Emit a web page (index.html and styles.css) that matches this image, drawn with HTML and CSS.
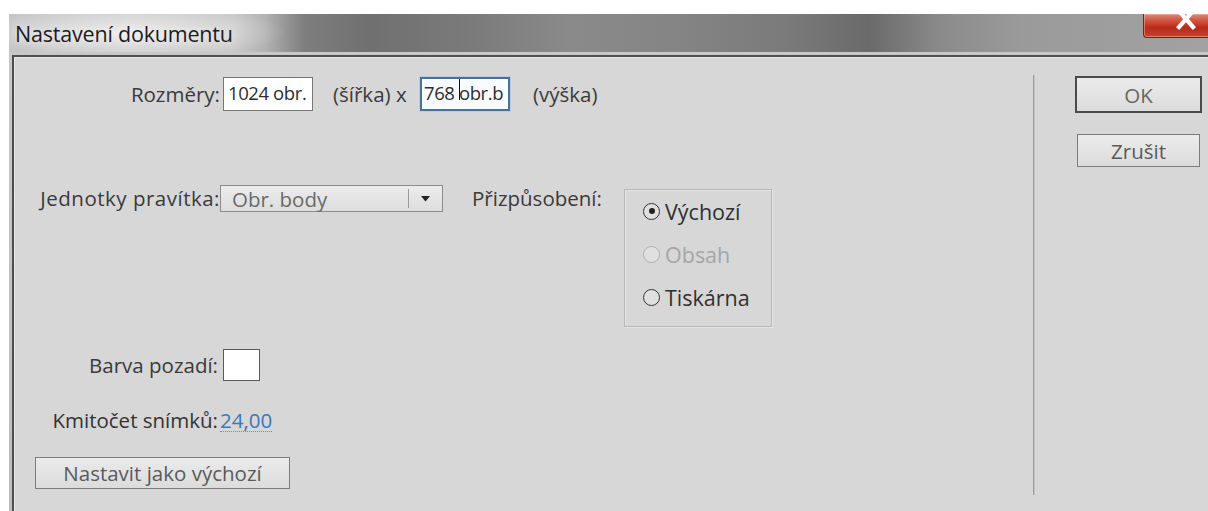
FILE: index.html
```html
<!DOCTYPE html>
<html lang="cs">
<head>
<meta charset="utf-8">
<title>Nastavení dokumentu</title>
<link rel="stylesheet" href="styles.css">
</head>
<body>
<div class="window">
  <div class="titlebar">
    <span class="title">Nastavení dokumentu</span>
    <div class="close">
      <svg class="close-x" width="22" height="20" viewBox="0 0 22 20">
        <path d="M4 1 L18 17 M18 1 L4 17" stroke="#fff" stroke-width="4.2" stroke-linecap="square"/>
      </svg>
    </div>
  </div>
  <div class="frame">
    <div class="dialog">
      <div class="main">
        <div class="row row-size">
          <span class="lbl">Rozměry:</span>
          <span class="field field-w">1024 obr.</span>
          <span class="txt txt-w">(šířka) x</span>
          <span class="field field-h focused">768 <span class="caret"></span>obr.b</span>
          <span class="txt txt-h">(výška)</span>
        </div>
        <div class="row row-units">
          <span class="lbl lbl-units">Jednotky pravítka:</span>
          <div class="select">
            <span class="select-value">Obr. body</span>
            <span class="select-arrow">
              <svg width="9" height="6" viewBox="0 0 9 6"><path d="M0 0 H9 L4.5 5.5 Z" fill="#222"/></svg>
            </span>
          </div>
          <span class="txt fit">Přizpůsobení:</span>
          <div class="group">
            <div class="radio checked"><span class="dot"></span>Výchozí</div>
            <div class="radio disabled"><span class="dot"></span>Obsah</div>
            <div class="radio"><span class="dot"></span>Tiskárna</div>
          </div>
        </div>
        <div class="row row-bg">
          <span class="lbl lbl-short">Barva pozadí:</span>
          <span class="swatch"></span>
        </div>
        <div class="row row-fps">
          <span class="lbl lbl-short">Kmitočet snímků:</span>
          <span class="fps">24,00</span>
        </div>
        <div class="row row-btn">
          <button class="btn btn-default-set">Nastavit jako výchozí</button>
        </div>
      </div>
      <div class="sep"></div>
      <div class="side">
        <button class="btn btn-ok">OK</button>
        <button class="btn btn-cancel">Zrušit</button>
      </div>
    </div>
  </div>
</div>
</body>
</html>
```

FILE: styles.css
```css
html, body {
  margin: 0;
  padding: 0;
  background: #ffffff;
}

body {
  width: 1208px;
  height: 511px;
  overflow: hidden;
  font-family: "Open Sans", "Noto Sans", sans-serif;
}

.window {
  margin: 14px 0 0 9px;
  height: 497px;
  display: flex;
  flex-direction: column;
}

/* glass title bar */
.titlebar {
  position: relative;
  height: 38px;
  flex: none;
  display: flex;
  align-items: center;
  background:
    radial-gradient(ellipse 160px 26px at 118px 18px, rgba(245,245,245,0.75), rgba(245,245,245,0) 100%),
    linear-gradient(to right,
      #c4c4c4 0px, #cdcdcd 120px, #c9c9c9 225px, #b4b4b4 255px,
      #7e7e7e 295px, #707070 360px, #7a7a7a 460px, #8a8a8a 560px,
      #858585 660px, #7a7a7a 780px, #6a6a6a 860px, #8a8a8a 930px,
      #9a9a9a 1010px, #a2a2a2 1199px);
}

.title {
  margin-left: 6px;
  font-size: 21.5px;
  color: #1c1c1c;
  letter-spacing: -0.2px;
  text-shadow: 0 0 8px rgba(255,255,255,0.9);
}

.close {
  position: absolute;
  left: 1134px;
  top: 0;
  width: 80px;
  height: 24px;
  box-sizing: border-box;
  border: 1px solid #5e2a22;
  border-top: none;
  border-radius: 0 0 0 4px;
  overflow: hidden;
  background: linear-gradient(to bottom, #d98a7a 0%, #cf4a34 35%, #b8291a 60%, #c2452f 100%);
  box-shadow: inset 0 0 0 1px rgba(255,200,190,0.45);
}

.close-x {
  position: absolute;
  left: 31px;
  top: -4px;
}

/* window frame below the title bar */
.frame {
  flex: 1;
  padding: 3px 0 0 3px;
  background: linear-gradient(to bottom, #c8c8c8, #bdbdbd);
  display: flex;
}

.dialog {
  flex: 1;
  display: flex;
  background: #d7d7d7;
  border-top: 2px solid #4e4e4e;
  border-left: 2px solid #4e4e4e;
  box-shadow: inset 1px 1px 0 #e6e6e6;
  color: #3a3a3a;
  font-size: 20.5px;
}

.main {
  width: 1019px;
  padding-top: 20px;
  display: flex;
  flex-direction: column;
}

.row {
  display: flex;
  align-items: center;
}

.lbl {
  width: 206px;
  text-align: right;
  white-space: nowrap;
}

.lbl-short {
  width: 204px;
}

/* size row */
.row-size {
  height: 34px;
}

.field {
  box-sizing: border-box;
  height: 34px;
  line-height: 30px;
  background: #ffffff;
  border: 1px solid #777777;
  color: #2e2e2e;
  font-size: 18.5px;
  white-space: pre;
  overflow: hidden;
  letter-spacing: -0.4px;
}

.field-w {
  width: 90px;
  margin-left: 3px;
  padding-left: 4px;
}

.field-h {
  width: 90px;
  padding-left: 2px;
  line-height: 28px;
}

.focused {
  border: 2px solid #4d6f96;
  box-shadow: 0 0 0 1px #b7cde4;
  background: #f8fbff;
}

.caret {
  display: inline-block;
  width: 1px;
  height: 21px;
  background: #111;
  margin-right: -1px;
  vertical-align: top;
}

.txt {
  white-space: nowrap;
}

.txt-w {
  width: 87px;
  margin-left: 20px;
}

.txt-h {
  margin-left: 23px;
}

/* ruler units row */
.row-units {
  margin-top: 74px;
  align-items: flex-start;
}

.lbl-units {
  line-height: 27px;
  letter-spacing: 0.5px;
}

.select {
  box-sizing: border-box;
  width: 223px;
  height: 27px;
  display: flex;
  align-items: center;
  border: 1px solid #8c8c8c;
  background: linear-gradient(to bottom, #ececec, #dddddd);
  color: #6a6a6a;
}

.select-value {
  flex: 1;
  padding-left: 11px;
}

.select-arrow {
  width: 33px;
  height: 19px;
  border-left: 1px solid #9a9a9a;
  display: flex;
  align-items: center;
  justify-content: center;
}

.fit {
  width: 152px;
  margin-left: 29px;
  line-height: 27px;
}

.group {
  box-sizing: border-box;
  width: 148px;
  height: 138px;
  margin-top: 4px;
  border: 1px solid #b8b8b8;
  box-shadow: inset 1px 1px 0 #e4e4e4, 1px 1px 0 #e4e4e4;
  padding: 8px 0 0 18px;
  display: flex;
  flex-direction: column;
  gap: 17px;
}

.radio {
  height: 26px;
  display: flex;
  align-items: center;
  color: #303030;
  font-size: 21.5px;
}

.dot {
  box-sizing: border-box;
  width: 17px;
  height: 17px;
  border-radius: 50%;
  border: 1.5px solid #333;
  margin-right: 5px;
  display: flex;
  align-items: center;
  justify-content: center;
  background: #e0e0e0;
}

.checked .dot::after {
  content: "";
  width: 6px;
  height: 6px;
  border-radius: 50%;
  background: #222;
}

.disabled {
  color: #a6a6a6;
}

.disabled .dot {
  border-color: #b0b0b0;
}

/* background colour row */
.row-bg {
  margin-top: 22px;
  height: 32px;
}

.swatch {
  box-sizing: border-box;
  width: 37px;
  height: 32px;
  margin-left: 5px;
  background: #ffffff;
  border: 1px solid #5a5a5a;
}

/* frame rate row */
.row-fps {
  margin-top: 27px;
  height: 24px;
  color: #333;
}

.fps {
  margin-left: 2px;
  color: #3a78b8;
  border-bottom: 1px dotted #5b8fc8;
  line-height: 22px;
}

/* buttons */
.row-btn {
  margin-top: 25px;
}

.btn {
  box-sizing: border-box;
  font-family: inherit;
  font-size: 20.5px;
  color: #5a5a5a;
  background: linear-gradient(to bottom, #ebebeb, #dcdcdc);
  border: 1px solid #7c7c7c;
  padding: 0;
  display: flex;
  align-items: center;
  justify-content: center;
}

.btn-default-set {
  width: 255px;
  height: 32px;
  margin-left: 21px;
}

.sep {
  width: 1px;
  margin-top: 18px;
  height: 420px;
  background: #9e9e9e;
  border-right: 1px solid #c4c4c4;
}

.side {
  flex: 1;
  display: flex;
  flex-direction: column;
}

.btn-ok {
  width: 127px;
  height: 37px;
  margin: 19px 0 0 40px;
  border: 2px solid #4a4a4a;
  color: #666;
}

.btn-cancel {
  width: 123px;
  height: 33px;
  margin: 21px 0 0 42px;
}
```
